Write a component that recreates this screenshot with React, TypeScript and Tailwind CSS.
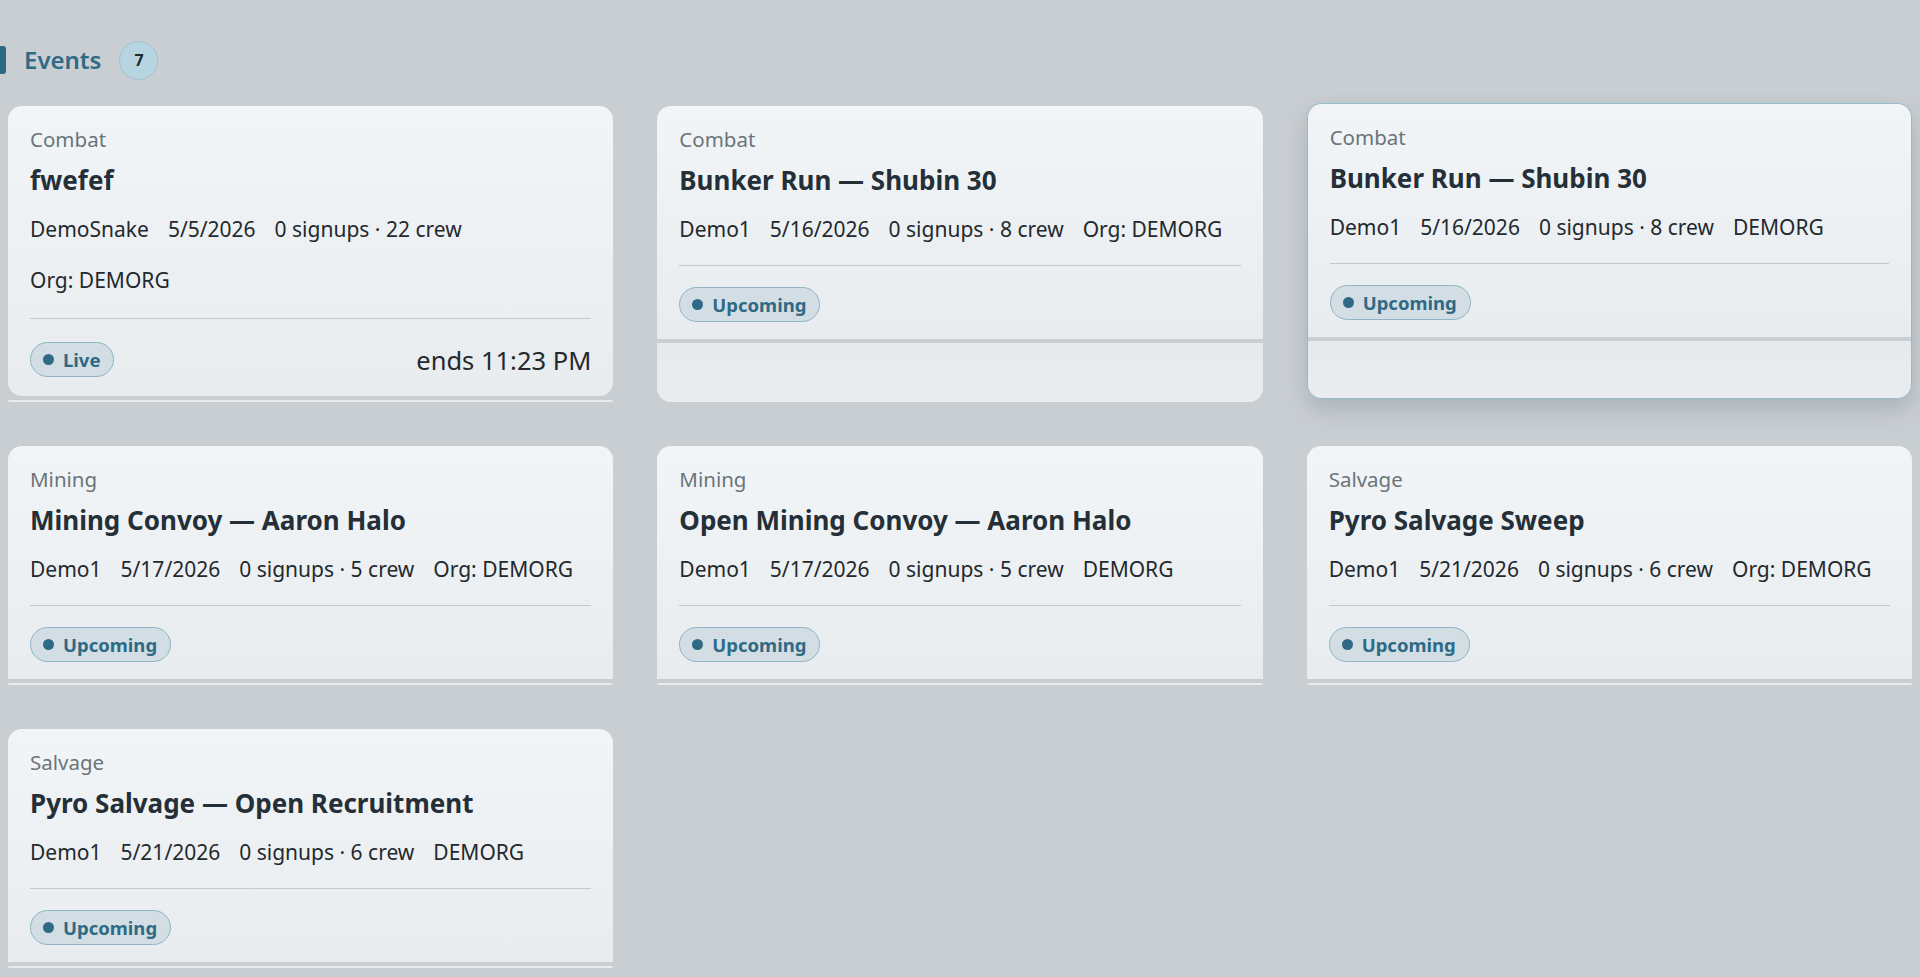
import type { ReactNode } from 'react'

type EventCard = {
  category: string
  title: string
  host: string
  date: string
  signups: string
  org: string
  live?: boolean
  ends?: string
  hovered?: boolean
}

const EVENTS: EventCard[] = [
  { category: 'Combat', title: 'fwefef', host: 'DemoSnake', date: '5/5/2026', signups: '0 signups · 22 crew', org: 'Org: DEMORG', live: true, ends: 'ends 11:23 PM' },
  { category: 'Combat', title: 'Bunker Run — Shubin 30', host: 'Demo1', date: '5/16/2026', signups: '0 signups · 8 crew', org: 'Org: DEMORG' },
  { category: 'Combat', title: 'Bunker Run — Shubin 30', host: 'Demo1', date: '5/16/2026', signups: '0 signups · 8 crew', org: 'DEMORG', hovered: true },
  { category: 'Mining', title: 'Mining Convoy — Aaron Halo', host: 'Demo1', date: '5/17/2026', signups: '0 signups · 5 crew', org: 'Org: DEMORG' },
  { category: 'Mining', title: 'Open Mining Convoy — Aaron Halo', host: 'Demo1', date: '5/17/2026', signups: '0 signups · 5 crew', org: 'DEMORG' },
  { category: 'Salvage', title: 'Pyro Salvage Sweep', host: 'Demo1', date: '5/21/2026', signups: '0 signups · 6 crew', org: 'Org: DEMORG' },
  { category: 'Salvage', title: 'Pyro Salvage — Open Recruitment', host: 'Demo1', date: '5/21/2026', signups: '0 signups · 6 crew', org: 'DEMORG' },
]

function StatusPill({ children }: { children: ReactNode }) {
  return (
    <span className="inline-flex h-[35px] items-center gap-[9px] rounded-full border border-[#8fb5c5] bg-[#d2dee3] pl-[12px] pr-[13px] text-[18.5px] font-bold text-[#2e6a85]">
      <span className="h-[11px] w-[11px] rounded-full bg-[#2e6a85]" />
      {children}
    </span>
  )
}

function Card({ event }: { event: EventCard }) {
  return (
    <div
      className={
        event.hovered
          ? 'flex h-full -translate-y-[3px] flex-col rounded-[14px] border border-[#93bccb] shadow-[0_10px_22px_rgba(60,80,95,0.22)]'
          : 'flex h-full flex-col'
      }
    >
      <div
        className={
          event.live
            ? 'rounded-[14px] bg-linear-to-b from-[#f1f5f8] to-[#e8ecef] px-[22px] pt-[20px] pb-[19px]'
            : 'rounded-t-[14px] bg-linear-to-b from-[#f1f5f8] to-[#e8ecef] px-[22px] pt-[20px] pb-[17px]'
        }
      >
        <div className="text-[20.5px] leading-[26px] text-[#6b7479]">{event.category}</div>
        <div className="mt-[11px] text-[26px] font-bold leading-[34px] text-[#252f37]">{event.title}</div>
        <div className="mt-[18px] flex flex-wrap gap-x-[19px] gap-y-[23px] text-[21px] leading-[28px] text-[#23292d]">
          <span>{event.host}</span>
          <span>{event.date}</span>
          <span>{event.signups}</span>
          <span>{event.org}</span>
        </div>
        <div className={event.live ? 'mt-[24px] h-px bg-[#c2c8cc]' : 'mt-[22px] h-px bg-[#c2c8cc]'} />
        <div className={event.live ? 'mt-[23px] flex items-center justify-between' : 'mt-[21px] flex items-center justify-between'}>
          <StatusPill>{event.live ? 'Live' : 'Upcoming'}</StatusPill>
          {event.ends && <span className="text-[25.5px] leading-[34px] text-[#23292d]">{event.ends}</span>}
        </div>
      </div>
      <div className="h-[4px]" />
      <div className="min-h-[2px] flex-1 rounded-b-[14px] bg-linear-to-b from-[#e6eaed] to-[#e9edf0]" />
    </div>
  )
}

export default function App() {
  return (
    <div className="min-h-screen bg-[#c9ced2] pt-[44px] font-['Noto_Sans',sans-serif]">
      <div className="flex h-[32px] items-center">
        <div className="h-[28px] w-[6px] rounded-r-[3px] bg-[#2f6885]" />
        <h2 className="ml-[18px] text-[24px] font-semibold text-[#2f6a86]">Events</h2>
        <span className="ml-[18px] flex h-[39px] w-[39px] items-center justify-center rounded-full border border-[#9ec2cf] bg-[#b7d5e0] text-[16px] font-bold text-[#1f2a30]">
          7
        </span>
      </div>
      <div className="mt-[30px] grid grid-cols-3 gap-x-[44px] gap-y-[44px] px-[8px] pb-10">
        {EVENTS.map((event, index) => (
          <Card key={index} event={event} />
        ))}
      </div>
    </div>
  )
}
